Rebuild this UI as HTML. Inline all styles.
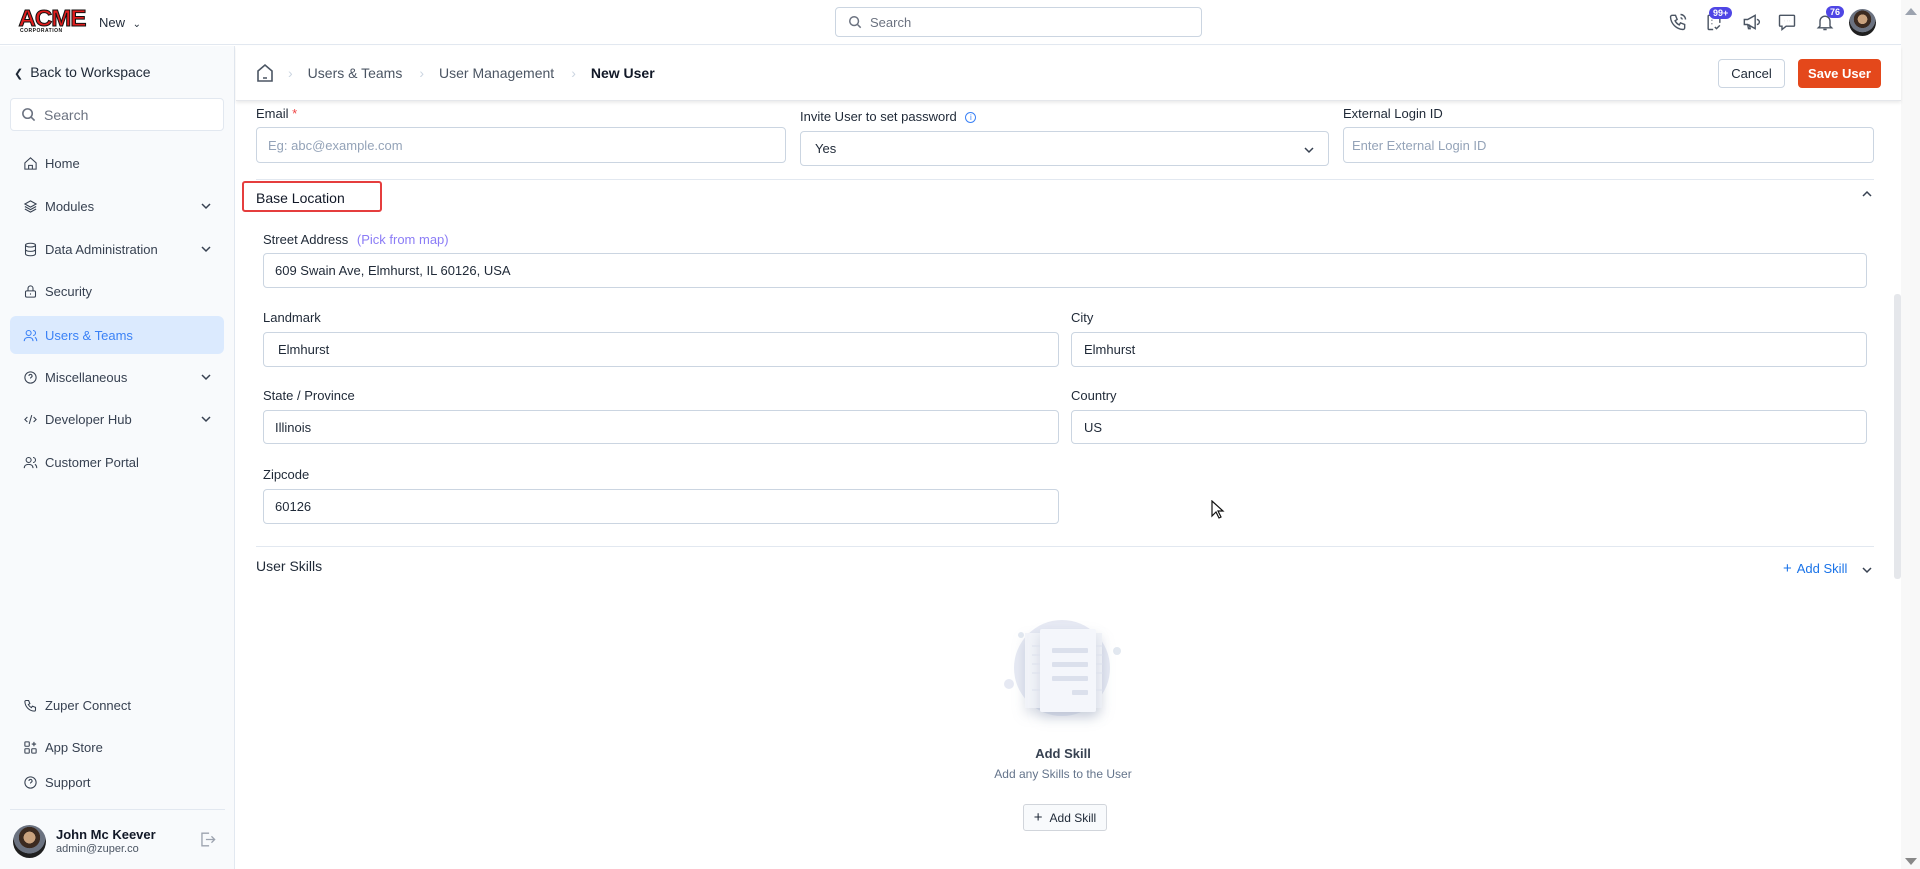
<!DOCTYPE html>
<html><head><meta charset="utf-8"><style>
*{box-sizing:border-box;margin:0;padding:0}
body{width:1920px;height:869px;overflow:hidden;font-family:"Liberation Sans",sans-serif;color:#1f2937;background:#fff;position:relative;font-size:14px}
.a{position:absolute}
.top{left:0;top:0;width:1901px;height:45px;border-bottom:1px solid #e2e8f0;background:#fff}
.side{left:0;top:46px;width:235px;height:823px;background:#f8fafc;border-right:1px solid #e2e8f0}
.mi{position:absolute;left:10px;width:214px;height:38px;display:flex;align-items:center;padding-left:13px;color:#374151;font-size:13px}
.mi svg.i{width:15px;height:15px;margin-right:7px;stroke:#374151;fill:none;stroke-width:1.7}
.mi svg.chev{position:absolute;right:12px;top:13px;width:12px;height:12px;stroke:#374151;fill:none;stroke-width:1.5}
.act{background:#dbeafe;border-radius:6px;color:#3b82f6}
.act svg.i{stroke:#3b82f6}
.lbl{font-size:13px;color:#1f2937}
.inp{border:1px solid #cbd5e1;border-radius:4px;background:#fff;font-size:13px;display:flex;align-items:center;padding-left:11px;color:#1f2937}
.ph{color:#94a3b8}
.ic{stroke:#4b5563;fill:none;stroke-width:1.7}
.badge{background:#4f46e5;color:#fff;font-size:9px;border-radius:8px;padding:1px 4px;font-weight:bold}
</style></head><body>
<div class="a top"></div>
<div class="a" style="left:20px;top:8px;width:60px;height:26px">
<div style="font:900 23px/20px 'Liberation Sans',sans-serif;color:#e11d1d;letter-spacing:-1px;-webkit-text-stroke:1px #111;transform:scaleX(1.05)">ACME</div>
<div style="font:bold 5px/6px 'Liberation Sans',sans-serif;color:#111;letter-spacing:0.5px">CORPORATION</div>
</div>
<div class="a" style="left:99px;top:15px;font-size:13px;color:#1f2937">New <span style="font-size:10px;margin-left:4px">&#8964;</span></div>
<div class="a inp" style="left:835px;top:7px;width:367px;height:30px;padding-left:12px"><svg width="14" height="14" viewBox="0 0 16 16" class="ic" style="stroke:#6b7280"><circle cx="7" cy="7" r="5"/><path d="M11 11l3.5 3.5"/></svg><span class="ph" style="margin-left:8px;color:#6b7280">Search</span></div>
<svg class="a ic" style="left:1668px;top:12px" width="20" height="20" viewBox="0 0 24 24"><path d="M5 4h4l2 5-2.5 1.5a11 11 0 0 0 5 5L15 13l5 2v4a2 2 0 0 1-2 2A16 16 0 0 1 3 6a2 2 0 0 1 2-2"/><path d="M15 3a6 6 0 0 1 6 6M15 7a2 2 0 0 1 2 2"/></svg>
<svg class="a ic" style="left:1704px;top:12px" width="20" height="20" viewBox="0 0 24 24"><path d="M9 4H6a1 1 0 0 0-1 1v15a1 1 0 0 0 1 1h5M15 4h3a1 1 0 0 1 1 1v8"/><path d="M9 10h1M9 14h1M13 18l2 2 4-4"/></svg>
<div class="a badge" style="left:1709px;top:7px">99+</div>
<svg class="a ic" style="left:1741px;top:12px" width="20" height="20" viewBox="0 0 24 24"><path d="M4 9h4l9-5v16l-9-5H4zM8 15l1 5h2l-1-5M19 9a3 3 0 0 1 0 6"/></svg>
<svg class="a ic" style="left:1777px;top:12px" width="20" height="20" viewBox="0 0 24 24"><path d="M4 4h16a1 1 0 0 1 1 1v11a1 1 0 0 1-1 1H11l-5 4v-4H4a1 1 0 0 1-1-1V5a1 1 0 0 1 1-1z"/><path d="M8.5 10.5h.1M12 10.5h.1M15.5 10.5h.1" stroke-width="2.2"/></svg>
<svg class="a ic" style="left:1815px;top:12px" width="20" height="20" viewBox="0 0 24 24"><path d="M6 17V11a6 6 0 0 1 12 0v6l2 2H4zM10 21h4"/></svg>
<div class="a badge" style="left:1826px;top:6px">76</div>
<div class="a" style="left:1849px;top:9px;width:27px;height:27px;border-radius:50%;background:radial-gradient(circle at 50% 38%,#c9a27e 0 22%,#3b2a20 23% 40%,#6b7280 41% 60%,#1f1f1f 61%)"></div>
<div class="a" style="left:1901px;top:0;width:19px;height:869px;background:#f8f8f8"></div>
<div class="a" style="left:1905px;top:8px;width:0;height:0;border-left:6px solid transparent;border-right:6px solid transparent;border-bottom:7px solid #9ca3af"></div>
<div class="a" style="left:1905px;top:858px;width:0;height:0;border-left:6px solid transparent;border-right:6px solid transparent;border-top:7px solid #888"></div>
<div class="a" style="left:1894px;top:294px;width:7px;height:285px;background:#e5e7eb;border-radius:3px"></div>

<div class="a side"></div>
<div class="a" style="left:14px;top:64px;font-size:14px;color:#1f2937"><span style="font-size:11px;margin-right:7px">&#10094;</span>Back to Workspace</div>
<div class="a inp" style="left:10px;top:98px;width:214px;height:33px;border-color:#e2e8f0;padding-left:10px"><svg width="15" height="15" viewBox="0 0 16 16" class="ic" style="stroke:#6b7280"><circle cx="7" cy="7" r="5"/><path d="M11 11l3.5 3.5"/></svg><span style="margin-left:8px;color:#6b7280;font-size:14px">Search</span></div>
<div class="mi" style="top:144px"><svg class="i" viewBox="0 0 24 24"><path d="M3 11l9-8 9 8v10H3zM9 21v-6h6v6"/></svg>Home</div>
<div class="mi" style="top:187px"><svg class="i" viewBox="0 0 24 24"><path d="M12 3l9 5-9 5-9-5zM3 12l9 5 9-5M3 16l9 5 9-5"/></svg>Modules<svg class="chev" viewBox="0 0 12 12"><path d="M2 4l4 4 4-4"/></svg></div>
<div class="mi" style="top:230px"><svg class="i" viewBox="0 0 24 24"><ellipse cx="12" cy="5" rx="8" ry="3"/><path d="M4 5v14c0 1.7 3.6 3 8 3s8-1.3 8-3V5M4 12c0 1.7 3.6 3 8 3s8-1.3 8-3"/></svg>Data Administration<svg class="chev" viewBox="0 0 12 12"><path d="M2 4l4 4 4-4"/></svg></div>
<div class="mi" style="top:272px"><svg class="i" viewBox="0 0 24 24"><rect x="4" y="11" width="16" height="10" rx="2"/><path d="M8 11V7a4 4 0 0 1 8 0v4M12 15v2"/></svg>Security</div>
<div class="mi act" style="top:316px"><svg class="i" viewBox="0 0 24 24"><circle cx="9" cy="8" r="4"/><path d="M2 21c0-4 3-6 7-6s7 2 7 6M16 4a4 4 0 0 1 0 8M19 15c2 1 3 3 3 6"/></svg>Users &amp; Teams</div>
<div class="mi" style="top:358px"><svg class="i" viewBox="0 0 24 24"><circle cx="12" cy="12" r="9"/><path d="M9.5 9.5a2.5 2.5 0 1 1 3.5 2.3c-.7.4-1 1-1 1.7M12 17h.1"/></svg>Miscellaneous<svg class="chev" viewBox="0 0 12 12"><path d="M2 4l4 4 4-4"/></svg></div>
<div class="mi" style="top:400px"><svg class="i" viewBox="0 0 24 24"><path d="M7 8l-4 4 4 4M17 8l4 4-4 4M14 5l-4 14"/></svg>Developer Hub<svg class="chev" viewBox="0 0 12 12"><path d="M2 4l4 4 4-4"/></svg></div>
<div class="mi" style="top:443px"><svg class="i" viewBox="0 0 24 24"><circle cx="9" cy="8" r="4"/><path d="M2 21c0-4 3-6 7-6s7 2 7 6M16 4a4 4 0 0 1 0 8M19 15c2 1 3 3 3 6"/></svg>Customer Portal</div>
<div class="mi" style="top:686px"><svg class="i" viewBox="0 0 24 24"><path d="M5 4h4l2 5-2.5 1.5a11 11 0 0 0 5 5L15 13l5 2v4a2 2 0 0 1-2 2A16 16 0 0 1 3 6a2 2 0 0 1 2-2"/></svg>Zuper Connect</div>
<div class="mi" style="top:728px"><svg class="i" viewBox="0 0 24 24"><rect x="3" y="3" width="7" height="7" rx="1"/><rect x="3" y="14" width="7" height="7" rx="1"/><rect x="14" y="14" width="7" height="7" rx="1"/><path d="M17.5 3v7M14 6.5h7"/></svg>App Store</div>
<div class="mi" style="top:763px"><svg class="i" viewBox="0 0 24 24"><circle cx="12" cy="12" r="9"/><path d="M9.5 9.5a2.5 2.5 0 1 1 3.5 2.3c-.7.4-1 1-1 1.7M12 17h.1"/></svg>Support</div>
<div class="a" style="left:10px;top:809px;width:215px;height:1px;background:#e2e8f0"></div>
<div class="a" style="left:13px;top:825px;width:33px;height:33px;border-radius:50%;background:radial-gradient(circle at 50% 38%,#c9a27e 0 22%,#3b2a20 23% 40%,#6b7280 41% 60%,#1f1f1f 61%)"></div>
<div class="a" style="left:56px;top:827px;font-size:13px;font-weight:bold;color:#111827">John Mc Keever</div>
<div class="a" style="left:56px;top:843px;font-size:11px;color:#4b5563">admin@zuper.co</div>
<svg class="a" style="left:198px;top:830px;stroke:#9ca3af;fill:none;stroke-width:1.7" width="19" height="19" viewBox="0 0 24 24"><path d="M14 4H5v16h9M10 12h11M17 8l4 4-4 4"/></svg>

<div class="a" style="left:236px;top:46px;width:1665px;height:55px;background:#fff;box-shadow:0 2px 3px rgba(0,0,0,.08);border-bottom:1px solid #e5e7eb"></div>
<svg class="a" style="left:256px;top:63px;stroke:#4b5563;fill:none;stroke-width:1.6" width="18" height="20" viewBox="0 0 18 20"><path d="M2 8l7-6 7 6v10H2zM7 15h4"/></svg>
<div class="a" style="left:288px;top:65px;font-size:14px;color:#4b5563;white-space:nowrap">
<span style="color:#cbd5e1;margin-right:15px">&#8250;</span>Users &amp; Teams<span style="color:#cbd5e1;margin:0 15px 0 17px">&#8250;</span>User Management<span style="color:#cbd5e1;margin:0 15px 0 17px">&#8250;</span><span style="color:#111827;font-weight:bold">New User</span></div>
<div class="a" style="left:1718px;top:59px;width:67px;height:29px;border:1px solid #cbd5e1;border-radius:4px;font-size:13px;display:flex;align-items:center;justify-content:center;color:#1f2937">Cancel</div>
<div class="a" style="left:1798px;top:59px;width:83px;height:29px;background:#e4481b;border-radius:4px;font-size:13px;font-weight:bold;display:flex;align-items:center;justify-content:center;color:#fff">Save User</div>

<div class="a lbl" style="left:256px;top:106px">Email <span style="color:#ef4444">*</span></div>
<div class="a inp" style="left:256px;top:127px;width:530px;height:36px"><span class="ph">Eg: abc@example.com</span></div>
<div class="a lbl" style="left:800px;top:109px">Invite User to set password <span style="color:#3b82f6;border:1px solid #3b82f6;border-radius:50%;display:inline-block;width:11px;height:11px;line-height:10px;text-align:center;font-size:8px;margin-left:5px;vertical-align:1px">i</span></div>
<div class="a inp" style="left:800px;top:131px;width:529px;height:35px;padding-left:14px">Yes<svg style="position:absolute;right:14px;top:14px;stroke:#374151;fill:none;stroke-width:1.5" width="10" height="8" viewBox="0 0 10 8"><path d="M1 2l4 4 4-4"/></svg></div>
<div class="a lbl" style="left:1343px;top:106px">External Login ID</div>
<div class="a inp" style="left:1343px;top:127px;width:531px;height:36px;padding-left:8px"><span class="ph">Enter External Login ID</span></div>
<div class="a" style="left:256px;top:179px;width:1618px;height:1px;background:#e2e8f0"></div>

<div class="a" style="left:242px;top:181px;width:140px;height:31px;border:2px solid #e53e3e;border-radius:3px"></div>
<div class="a" style="left:256px;top:190px;font-size:14px;color:#111827">Base Location</div>
<svg class="a" style="left:1862px;top:190px;stroke:#374151;fill:none;stroke-width:1.5" width="10" height="8" viewBox="0 0 10 8"><path d="M1 6l4-4 4 4"/></svg>
<div class="a lbl" style="left:263px;top:232px">Street Address <span style="color:#8b7cf6;margin-left:5px">(Pick from map)</span></div>
<div class="a inp" style="left:263px;top:253px;width:1604px;height:35px">609 Swain Ave, Elmhurst, IL 60126, USA</div>
<div class="a lbl" style="left:263px;top:310px">Landmark</div>
<div class="a inp" style="left:263px;top:332px;width:796px;height:35px;padding-left:14px">Elmhurst</div>
<div class="a lbl" style="left:1071px;top:310px">City</div>
<div class="a inp" style="left:1071px;top:332px;width:796px;height:35px;padding-left:12px">Elmhurst</div>
<div class="a lbl" style="left:263px;top:388px">State / Province</div>
<div class="a inp" style="left:263px;top:410px;width:796px;height:34px">Illinois</div>
<div class="a lbl" style="left:1071px;top:388px">Country</div>
<div class="a inp" style="left:1071px;top:410px;width:796px;height:34px;padding-left:12px">US</div>
<div class="a lbl" style="left:263px;top:467px">Zipcode</div>
<div class="a inp" style="left:263px;top:489px;width:796px;height:35px">60126</div>
<svg class="a" style="left:1211px;top:500px" width="14" height="20" viewBox="0 0 14 20"><path d="M1 1v15l4-4 3 6 2-1-3-6h5z" fill="#fff" stroke="#111" stroke-width="1.2"/></svg>
<div class="a" style="left:256px;top:546px;width:1618px;height:1px;background:#e2e8f0"></div>

<div class="a" style="left:256px;top:558px;font-size:14px;color:#1f2937">User Skills</div>
<div class="a" style="left:1783px;top:560px;font-size:13px;color:#1a73e8"><span style="font-size:15px;margin-right:5px">+</span>Add Skill</div>
<svg class="a" style="left:1862px;top:566px;stroke:#374151;fill:none;stroke-width:1.5" width="10" height="8" viewBox="0 0 10 8"><path d="M1 2l4 4 4-4"/></svg>

<svg class="a" style="left:995px;top:615px" width="140" height="120" viewBox="0 0 140 120">
<defs><filter id="sh" x="-50%" y="-50%" width="200%" height="200%"><feDropShadow dx="0" dy="6" stdDeviation="6" flood-color="#94a3b8" flood-opacity=".35"/></filter></defs>
<circle cx="67" cy="53" r="48" fill="#e6e9f3"/>
<circle cx="26" cy="20" r="3" fill="#e2e8f0"/>
<circle cx="14" cy="69" r="5" fill="#e6e9f3"/>
<circle cx="122" cy="36" r="4" fill="#e2e8f0"/>
<rect x="30" y="18" width="77" height="75" fill="#f1f3f8" filter="url(#sh)"/>
<rect x="45" y="14" width="56" height="83" rx="2" fill="#f4f6fb" filter="url(#sh)"/>
<g fill="#dbe0ec"><rect x="57" y="33" width="36" height="5" rx="1"/><rect x="57" y="47" width="36" height="5" rx="1"/><rect x="57" y="61" width="36" height="5" rx="1"/><rect x="77" y="75" width="16" height="5" rx="1"/></g>
<g stroke="#dbe0ec" stroke-width="1"><path d="M37 31h8M37 40h8M37 49h8M37 58h8M37 75h8M101 31h7M101 40h7M101 49h7M101 58h7M101 75h7"/></g>
</svg>
<div class="a" style="left:963px;top:746px;width:200px;text-align:center;font-size:13px;font-weight:bold;color:#374151">Add Skill</div>
<div class="a" style="left:913px;top:767px;width:300px;text-align:center;font-size:12px;color:#64748b">Add any Skills to the User</div>
<div class="a" style="left:1023px;top:804px;width:84px;height:27px;border:1px solid #d1d5db;border-radius:3px;background:#f8fafc;font-size:12px;color:#1f2937;display:flex;align-items:center;justify-content:center"><span style="font-size:15px;margin-right:7px">+</span>Add Skill</div>
</body></html>
